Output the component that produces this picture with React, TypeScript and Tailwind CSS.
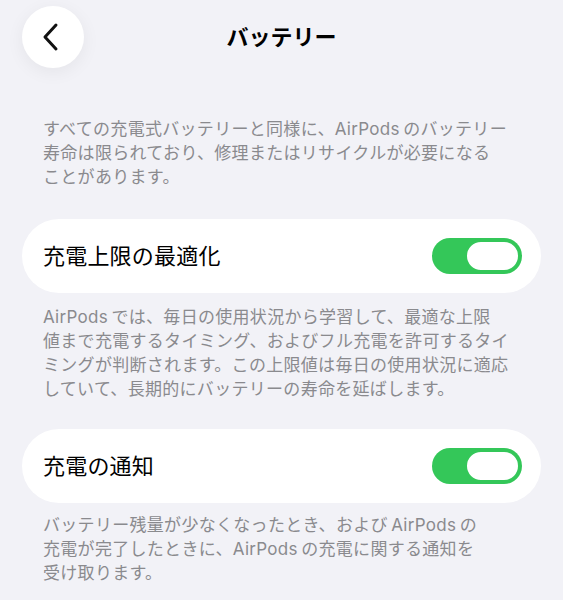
import React from "react";

const font = { fontFamily: '"Inter", "Noto Sans CJK JP", sans-serif' };

function Toggle() {
  return (
    <div className="relative h-[36px] w-[90px] shrink-0 rounded-full bg-[#34c759]">
      <div className="absolute right-[1px] top-[1px] h-[34px] w-[57px] rounded-full border-[3px] border-[#34c759] bg-white" />
    </div>
  );
}

function Row({ title }: { title: string }) {
  return (
    <div className="flex h-[74px] items-center justify-between rounded-full bg-white pl-[21px] pr-[19px]">
      <span className="text-[22px] leading-none tracking-[0.2px] text-black">{title}</span>
      <Toggle />
    </div>
  );
}

function Note({ children }: { children: React.ReactNode }) {
  return (
    <p className="px-[21px] text-[17px] leading-[24px] tracking-[0.3px] text-[#8a8a8e]">{children}</p>
  );
}

export default function App() {
  return (
    <div className="h-[600px] w-[563px] overflow-hidden bg-[#f2f2f7]" style={font}>
      <div className="relative flex h-[74px] items-start px-[22px] pt-[6px]">
        <div className="flex h-[62px] w-[62px] items-center justify-center rounded-full bg-white shadow-[0_4px_18px_rgba(0,0,0,0.06)]">
          <svg width="20" height="30" viewBox="0 0 20 30" className="-ml-[4px]">
            <path d="M15 3 L4 15 L15 27" fill="none" stroke="#111" strokeWidth="3" strokeLinecap="round" strokeLinejoin="round" />
          </svg>
        </div>
        <div className="absolute left-0 right-0 top-[22px] text-center text-[22px] font-bold leading-[30px] text-black">
          バッテリー
        </div>
      </div>
      <div className="px-[22px] pt-[43px]">
        <Note>
          すべての充電式バッテリーと同様に、AirPods&#8201;のバッテリー
          <br />
          寿命は限られており、修理またはリサイクルが必要になる
          <br />
          ことがあります。
        </Note>
        <div className="mt-[30px]">
          <Row title="充電上限の最適化" />
        </div>
        <div className="mt-[12px]">
          <Note>
            AirPods&#8201;では、毎日の使用状況から学習して、最適な上限
            <br />
            値まで充電するタイミング、およびフル充電を許可するタイ
            <br />
            ミングが判断されます。この上限値は毎日の使用状況に適応
            <br />
            していて、長期的にバッテリーの寿命を延ばします。
          </Note>
        </div>
        <div className="mt-[28px]">
          <Row title="充電の通知" />
        </div>
        <div className="mt-[10px]">
          <Note>
            バッテリー残量が少なくなったとき、および&#8201;AirPods&#8201;の
            <br />
            充電が完了したときに、AirPods&#8201;の充電に関する通知を
            <br />
            受け取ります。
          </Note>
        </div>
      </div>
    </div>
  );
}
